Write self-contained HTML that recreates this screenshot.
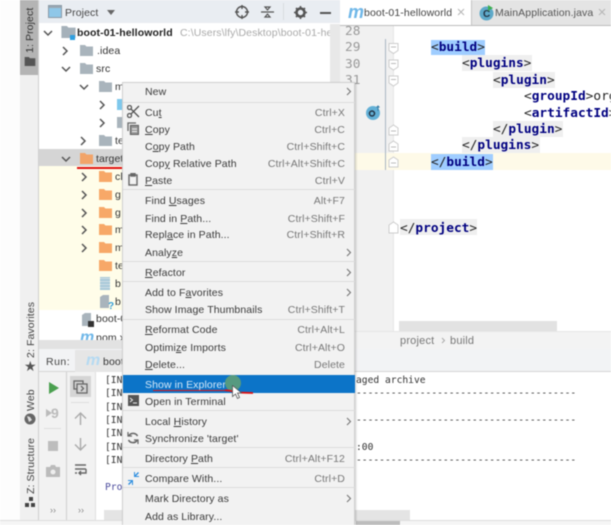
<!DOCTYPE html>
<html><head><meta charset="utf-8"><style>
html,body{margin:0;padding:0;background:#fff}
#r{position:relative;width:611px;height:525px;overflow:hidden;background:#fff;font:10.5px "Liberation Sans",sans-serif;color:#333;filter:blur(.45px)}
#r div,#r svg,#r span.a{position:absolute}
.t{white-space:pre;line-height:14px;height:14px;letter-spacing:.1px;margin-top:1px}
.m{color:#3a3a3a}
.k{color:#777;text-align:right;right:266px;width:150px;letter-spacing:.1px}
.s{left:123px;width:232px;height:1px;background:#dcdcdc}
.c{font:12.8px/16px "DejaVu Sans Mono",monospace;white-space:pre;color:#222;height:16px;margin-top:1px}
.c b{color:#000080}
.bg{background:#efefef}
.sel{background:#9fcdff}
.n{font:12.8px/16px "DejaVu Sans Mono",monospace;color:#999;left:345px;margin-top:1px}
.o{font:9.65px/13px "DejaVu Sans Mono",monospace;white-space:pre;color:#333;height:13px}
.v{transform-origin:0 0;transform:rotate(-90deg);white-space:pre;color:#444;line-height:14px;letter-spacing:.1px}
</style></head><body><div id="r">
<svg width="0" height="0" style="left:0;top:0"><defs>
<symbol id="f" viewBox="0 0 13 11"><path d="M0 0h5l1.5 1.5H13V11H0z"/></symbol>
<symbol id="ar" viewBox="0 0 8 10"><path d="M2 1l4 4-4 4" fill="none" stroke="#555" stroke-width="1.5"/></symbol>
<symbol id="ad" viewBox="0 0 10 8"><path d="M1 2l4 4 4-4" fill="none" stroke="#555" stroke-width="1.5"/></symbol>
</defs></svg>

<!-- left strips -->
<div style="left:0;top:0;width:20px;height:525px;background:#fdfdfd"></div>
<div style="left:20px;top:0;width:19px;height:525px;background:#f0f0f0"></div>
<div style="left:20px;top:0;width:18px;height:75px;background:#b4b4b4"></div>
<div style="left:38px;top:0;width:1px;height:525px;background:#cfcfcf"></div>
<div class="v" style="left:23px;top:53px;color:#333">1: Project</div>
<svg style="left:24px;top:57px" width="12" height="9" fill="#555"><use href="#f"/></svg>
<div class="v" style="left:24px;top:358px">2: Favorites</div>
<div style="left:24px;top:359px;font-size:14px;line-height:14px;color:#555">★</div>
<div class="v" style="left:24px;top:411px">Web</div>
<svg style="left:24px;top:413px" width="12" height="12"><circle cx="6" cy="6" r="5.5" fill="#666"/><path d="M3 3l3 1 2 3-3 2z" fill="#ddd"/></svg>
<div class="v" style="left:24px;top:494px">Z: Structure</div>
<svg style="left:25px;top:497px" width="11" height="11" fill="#444"><rect x="4" y="0" width="4" height="4"/><rect x="0" y="6" width="4" height="4"/><rect x="6" y="6" width="4" height="4"/></svg>

<!-- project toolbar -->
<div style="left:39px;top:0;width:301px;height:23px;background:#e9edf2"></div>
<svg style="left:48px;top:5px" width="14" height="13"><rect x=".5" y=".5" width="13" height="12" fill="#8fc7e8" stroke="#8a9aa8"/><rect x="1" y="1" width="12" height="2" fill="#9aa7b2"/></svg>
<div class="t" style="left:65px;top:5px;color:#444">Project</div>
<svg style="left:107px;top:10px" width="9" height="5"><path d="M0 0h8L4 5z" fill="#666"/></svg>
<svg style="left:235px;top:5px" width="14" height="14" fill="none" stroke="#555" stroke-width="1.4"><circle cx="7" cy="7" r="5.5"/><path d="M7 0v4M7 10v4M0 7h4M10 7h4"/></svg>
<svg style="left:261px;top:5px" width="13" height="14" fill="none" stroke="#555" stroke-width="1.2"><path d="M0 7h13M4 2h5L6.500 5zM4 12h5L6.500 9z"/></svg>
<div style="left:283px;top:3px;width:1px;height:17px;background:#d8dce0"></div>
<svg style="left:294px;top:6px" width="13" height="13"><circle cx="6.500" cy="6.500" r="4" fill="none" stroke="#555" stroke-width="2.600"/><path d="M6.500 0v13M0 6.500h13M2 2l9 9M11 2l-9 9" stroke="#555" stroke-width="1.600" stroke-dasharray="2 9 2 0"/></svg>
<div style="left:320px;top:12px;width:11px;height:1.500px;background:#555"></div>

<!-- tree -->
<div style="left:39px;top:23px;width:291px;height:317px;background:#fff"></div>
<div style="left:330px;top:24px;width:10px;height:60px;background:#e8e8e8"></div>
<div style="left:39px;top:149px;width:83px;height:17px;background:#d5d5d5"></div>
<div style="left:39px;top:166px;width:83px;height:144px;background:#fffde9"></div>
<svg style="left:43px;top:29px" width="10" height="8"><use href="#ad"/></svg>
<svg style="left:61px;top:26px" width="15" height="12"><use href="#f" fill="#a5b1ba"/></svg>
<div style="left:70px;top:35px;width:5px;height:5px;background:#2f9fe0"></div>
<div class="t" style="left:77px;top:25px;font-weight:bold;color:#222">boot-01-helloworld</div>
<div class="t" style="left:180px;top:25px;color:#aaa;width:150px;overflow:hidden">C:\Users\lfy\Desktop\boot-01-hello</div>
<svg style="left:61px;top:46px" width="8" height="10"><use href="#ar"/></svg>
<svg style="left:80px;top:45px" width="13" height="11"><use href="#f" fill="#a9b4bc"/></svg>
<div class="t" style="left:97px;top:43px">.idea</div>
<svg style="left:61px;top:65px" width="10" height="8"><use href="#ad"/></svg>
<svg style="left:80px;top:63px" width="13" height="11"><use href="#f" fill="#a9b4bc"/></svg>
<div class="t" style="left:96px;top:61px">src</div>
<svg style="left:79px;top:83px" width="10" height="8"><use href="#ad"/></svg>
<svg style="left:99px;top:81px" width="13" height="11"><use href="#f" fill="#a9b4bc"/></svg>
<div class="t" style="left:115px;top:79px">m</div>
<svg style="left:98px;top:100px" width="8" height="10"><use href="#ar"/></svg>
<svg style="left:117px;top:99px" width="13" height="11"><use href="#f" fill="#7fc8ec"/></svg>
<svg style="left:98px;top:118px" width="8" height="10"><use href="#ar"/></svg>
<svg style="left:117px;top:117px" width="13" height="11"><use href="#f" fill="#a9b4bc"/></svg>
<svg style="left:79px;top:136px" width="8" height="10"><use href="#ar"/></svg>
<svg style="left:99px;top:135px" width="13" height="11"><use href="#f" fill="#a9b4bc"/></svg>
<div class="t" style="left:115px;top:133px">te</div>
<svg style="left:61px;top:155px" width="10" height="8"><use href="#ad"/></svg>
<svg style="left:80px;top:153px" width="13" height="11"><use href="#f" fill="#f2a469"/></svg>
<div class="t" style="left:96px;top:151px">target</div>
<div style="left:77px;top:167px;width:62px;height:2px;background:#e01010"></div>
<svg style="left:80px;top:172px" width="8" height="10"><use href="#ar"/></svg>
<svg style="left:99px;top:171px" width="13" height="11"><use href="#f" fill="#f7a868"/></svg>
<div class="t" style="left:115px;top:169px">cl</div>
<svg style="left:80px;top:190px" width="8" height="10"><use href="#ar"/></svg>
<svg style="left:99px;top:189px" width="13" height="11"><use href="#f" fill="#f7a868"/></svg>
<div class="t" style="left:115px;top:187px">g</div>
<svg style="left:80px;top:208px" width="8" height="10"><use href="#ar"/></svg>
<svg style="left:99px;top:207px" width="13" height="11"><use href="#f" fill="#f7a868"/></svg>
<div class="t" style="left:115px;top:205px">g</div>
<svg style="left:80px;top:225px" width="8" height="10"><use href="#ar"/></svg>
<svg style="left:99px;top:224px" width="13" height="11"><use href="#f" fill="#f7a868"/></svg>
<div class="t" style="left:115px;top:222px">m</div>
<svg style="left:80px;top:243px" width="8" height="10"><use href="#ar"/></svg>
<svg style="left:99px;top:242px" width="13" height="11"><use href="#f" fill="#f7a868"/></svg>
<div class="t" style="left:115px;top:240px">m</div>
<svg style="left:99px;top:260px" width="13" height="11"><use href="#f" fill="#f7a868"/></svg>
<div class="t" style="left:115px;top:258px">te</div>
<div style="left:100px;top:277px;width:10px;height:13px;background:repeating-linear-gradient(0deg,#a8c8d8 0 2px,#d0dfe6 2px 3px)"></div>
<div class="t" style="left:115px;top:276px">b</div>
<svg style="left:100px;top:295px" width="14" height="14"><path d="M0 2l3-2h6v13H0z" fill="#a9b4bc"/><text x="8" y="14" font-size="10" font-weight="bold" fill="#38a0d8" font-family="Liberation Sans">?</text></svg>
<div class="t" style="left:115px;top:294px">b</div>
<svg style="left:82px;top:313px" width="12" height="14"><path d="M0 2l3-2h6v13H0z" fill="#a9b4bc"/><rect x="6" y="8" width="6" height="6" fill="#333"/></svg>
<div class="t" style="left:96px;top:311px">boot-0</div>
<div style="left:80px;top:331px;font:italic bold 16px/14px 'Liberation Sans',sans-serif;color:#6fb7e8">m</div>
<div class="t" style="left:96px;top:330px">pom.x</div>
<div style="left:39px;top:340px;width:301px;height:9px;background:#e2e2e2"></div>

<!-- tabs -->
<div style="left:340px;top:0;width:271px;height:26px;background:#e4e4e4;border-bottom:1px solid #bdbdbd;box-sizing:border-box"></div>
<div style="left:340px;top:0;width:131px;height:26px;background:#fff;border-bottom:1px solid #bdbdbd;box-sizing:border-box"></div>
<div style="left:471px;top:0;width:1px;height:25px;background:#c4c4c4"></div>
<div style="left:348px;top:3px;font:italic bold 18px/18px 'Liberation Sans',sans-serif;color:#6fb7e8">m</div>
<div class="t" style="left:364px;top:5px;color:#444;letter-spacing:.1px">boot-01-helloworld</div>
<svg style="left:457px;top:8px" width="8" height="8"><path d="M1 1l6 6M7 1L1 7" stroke="#b5b5b5" stroke-width="1"/></svg>
<svg style="left:479px;top:5px" width="16" height="16"><circle cx="7.500" cy="8.500" r="7" fill="#5ea9c9"/><text x="4" y="12" font-size="10" font-weight="bold" fill="#234" font-family="Liberation Sans">C</text><path d="M9 0l5 3-5 3z" fill="#3cae50"/></svg>
<div class="t" style="left:495px;top:5px;color:#555;letter-spacing:.1px">MainApplication.java</div>
<svg style="left:598px;top:8px" width="8" height="8"><path d="M1 1l6 6M7 1L1 7" stroke="#b5b5b5" stroke-width="1"/></svg>

<!-- gutter/editor -->
<div style="left:340px;top:26px;width:53px;height:305px;background:#f1f1f1"></div>
<div style="left:393px;top:26px;width:1px;height:305px;background:#e6e6e6"></div>
<div style="left:340px;top:153px;width:271px;height:17px;background:#fefae8"></div>
<div style="left:384.500px;top:39px;width:1.500px;height:131px;background:#a9b6c2"></div>
<div class="n" style="top:23px">28</div><div class="n" style="top:39px">29</div><div class="n" style="top:56px">30</div><div class="n" style="top:72px">31</div>
<svg style="left:365px;top:105px" width="16" height="16"><circle cx="8" cy="8" r="7" fill="#63b0d6"/><circle cx="7" cy="8.500" r="2.500" fill="none" stroke="#234" stroke-width="1.500"/><path d="M13 1v5M11.500 2.500L13 1l1.500 1.500" stroke="#3a7fa8" fill="none"/></svg>
<svg style="left:388px;top:43px" width="11" height="130" fill="#fff" stroke="#ccc"><path d="M1 .5h9v7l-4.500 3-4.500-3zM1 17h9v7l-4.500 3-4.500-3zM1 33h9v7l-4.500 3-4.500-3zM1 85l4.500-3 4.500 3v7H1zM1 101l4.500-3 4.500 3v7H1zM1 117l4.500-3 4.500 3v7H1z"/><path d="M3 4h5M3 20.500h5M3 36.500h5M3 88h5M3 104h5M3 120h5" stroke="#bbb"/></svg>
<svg style="left:388px;top:221px" width="11" height="14" fill="#fff" stroke="#ccc"><path d="M1 4l4.500-3 4.500 3v8H1z"/></svg>
<div class="sel" style="left:431px;top:40px;width:54px;height:15px"></div>
<div class="sel" style="left:431px;top:154px;width:62px;height:16px"></div>
<div class="bg" style="left:462px;top:55px;width:70px;height:16px"></div>
<div class="bg" style="left:493px;top:72px;width:62px;height:16px"></div>
<div class="bg" style="left:493px;top:121px;width:70px;height:16px"></div>
<div class="bg" style="left:462px;top:137px;width:78px;height:16px"></div>
<div class="bg" style="left:400px;top:219px;width:77px;height:16px"></div>
<div class="c" style="left:431px;top:39px">&lt;<b>build</b>&gt;</div>
<div class="c" style="left:462px;top:55px">&lt;<b>plugins</b>&gt;</div>
<div class="c" style="left:493px;top:72px">&lt;<b>plugin</b>&gt;</div>
<div class="c" style="left:524px;top:88px">&lt;<b>groupId</b>&gt;org</div>
<div class="c" style="left:524px;top:105px">&lt;<b>artifactId</b>&gt;</div>
<div class="c" style="left:493px;top:121px">&lt;/<b>plugin</b>&gt;</div>
<div class="c" style="left:462px;top:137px">&lt;/<b>plugins</b>&gt;</div>
<div class="c" style="left:431px;top:154px">&lt;/<b>build</b>&gt;</div>
<div class="c" style="left:400px;top:220px">&lt;/<b>project</b>&gt;</div>
<div style="left:399px;top:321px;width:158px;height:10px;background:#e2e2e2"></div>
<div style="left:340px;top:331px;width:271px;height:18px;background:#f3f3f3;border-top:1px solid #e6e6e6;box-sizing:border-box"></div>
<div class="t" style="left:400px;top:333px;color:#777;font-size:11px;letter-spacing:.2px">project</div>
<svg style="left:441px;top:337px" width="5" height="7"><path d="M1 1l2.500 2.500L1 6" fill="none" stroke="#aaa"/></svg>
<div class="t" style="left:450px;top:333px;color:#777;font-size:11px;letter-spacing:.2px">build</div>

<!-- run -->
<div style="left:39px;top:349px;width:572px;height:23px;background:#f2f3f5;border-bottom:1px solid #d6d6d6;box-sizing:border-box"></div>
<div style="left:75px;top:350px;width:60px;height:22px;background:#e6e6e6"></div>
<div class="t" style="left:46px;top:354px;color:#444;letter-spacing:.5px">Run:</div>
<div style="left:86px;top:353px;font:italic bold 16px/16px 'Liberation Sans',sans-serif;color:#b5daf2">m</div>
<div class="t" style="left:103px;top:354px">boot</div>
<div style="left:39px;top:372px;width:56px;height:148px;background:#f2f2f2"></div>
<div style="left:66px;top:372px;width:1px;height:148px;background:#cfcfcf"></div>
<div style="left:95px;top:372px;width:1px;height:148px;background:#e0e0e0"></div>
<svg style="left:49px;top:382px" width="10" height="12"><path d="M0 0l10 6-10 6z" fill="#4ba050"/></svg>
<svg style="left:46px;top:405px" width="15" height="15"><path d="M0 4l6 4-6 4z" fill="#bbb"/><text x="5" y="13" font-size="14" font-weight="bold" fill="#bbb" font-family="Liberation Sans">9</text></svg>
<div style="left:44px;top:428px;width:17px;height:1px;background:#ddd"></div>
<div style="left:48px;top:441px;width:10px;height:10px;background:#bdbdbd"></div>
<svg style="left:46px;top:465px" width="14" height="12"><path d="M0 2h4l1-2h4l1 2h4v10H0z" fill="#bbb"/><circle cx="7" cy="7" r="2.500" fill="#eee"/></svg>
<div style="left:70px;top:376px;width:21px;height:21px;background:#d5d5d5"></div>
<svg style="left:73px;top:380px" width="15" height="14" fill="none" stroke="#666" stroke-width="1.300"><rect x="1" y="1" width="9" height="8"/><rect x="4" y="4" width="10" height="9" fill="#d5d5d5"/><path d="M8 6l2.500 2.500L8 11"/></svg>
<div style="left:71px;top:402px;width:18px;height:1px;background:#ddd"></div>
<svg style="left:74px;top:412px" width="13" height="13" fill="none" stroke="#aaa" stroke-width="1.400"><path d="M6.500 13V1M1 6.500L6.500 1 12 6.500"/></svg>
<svg style="left:74px;top:438px" width="13" height="13" fill="none" stroke="#aaa" stroke-width="1.400"><path d="M6.500 0v12M1 6.500L6.500 12 12 6.500"/></svg>
<svg style="left:74px;top:464px" width="13" height="13" fill="none" stroke="#666" stroke-width="1.400"><path d="M1 1h11M1 5h11M12 5v4H5M7 7L5 9l2 2M1 9h2"/></svg>
<div style="left:50px;top:505px;font-size:9px;line-height:10px;color:#888">››</div>
<div style="left:78px;top:505px;font-size:9px;line-height:10px;color:#888">››</div>
<div class="o" style="left:105px;top:374px">[IN</div>
<div class="o" style="left:105px;top:387px">[IN</div>
<div class="o" style="left:105px;top:401px">[IN</div>
<div class="o" style="left:105px;top:414px">[IN</div>
<div class="o" style="left:105px;top:427px">[IN</div>
<div class="o" style="left:105px;top:441px">[IN</div>
<div class="o" style="left:105px;top:454px">[IN</div>
<div class="o" style="left:105px;top:481px;color:#4a4a9c">Pro</div>
<div class="o" style="left:356px;top:374px">aged archive</div>
<div class="o" style="left:356px;top:387px">--------------------------------------</div>
<div class="o" style="left:356px;top:414px">--------------------------------------</div>
<div class="o" style="left:356px;top:441px">:00</div>
<div class="o" style="left:356px;top:454px">--------------------------------------</div>
<div style="left:104px;top:510px;width:306px;height:10px;background:#e4e4e4"></div>
<div style="left:0;top:520px;width:611px;height:5px;background:#f5f5f5;border-top:1px solid #ddd;box-sizing:border-box"></div>
<div style="left:356px;top:521px;width:44px;height:4px;background:#bdbdbd"></div>

<!-- context menu -->
<div style="left:122px;top:82px;width:233px;height:443px;background:#f2f2f2;border:1px solid #d0d0d0;border-bottom:0;box-sizing:border-box;box-shadow:1px 1px 2px rgba(0,0,0,.2)"></div>
<div class="s" style="top:102px"></div><div class="s" style="top:189px"></div><div class="s" style="top:261px"></div><div class="s" style="top:281px"></div><div class="s" style="top:319px"></div><div class="s" style="top:410px"></div><div class="s" style="top:447px"></div><div class="s" style="top:467px"></div><div class="s" style="top:487px"></div>
<div style="left:123px;top:375px;width:232px;height:18px;background:#0c74c8"></div>
<div class="t m" style="left:145px;top:84px">New</div>
<div class="t m" style="left:145px;top:105px">Cu<u>t</u></div><div class="t k" style="top:105px">Ctrl+X</div>
<div class="t m" style="left:145px;top:122px"><u>C</u>opy</div><div class="t k" style="top:122px">Ctrl+C</div>
<div class="t m" style="left:145px;top:139px">C<u>o</u>py Path</div><div class="t k" style="top:139px">Ctrl+Shift+C</div>
<div class="t m" style="left:145px;top:156px">Cop<u>y</u> Relative Path</div><div class="t k" style="top:156px">Ctrl+Alt+Shift+C</div>
<div class="t m" style="left:145px;top:173px"><u>P</u>aste</div><div class="t k" style="top:173px">Ctrl+V</div>
<div class="t m" style="left:145px;top:193px">Find <u>U</u>sages</div><div class="t k" style="top:193px">Alt+F7</div>
<div class="t m" style="left:145px;top:211px">Find in <u>P</u>ath...</div><div class="t k" style="top:211px">Ctrl+Shift+F</div>
<div class="t m" style="left:145px;top:227px">Repl<u>a</u>ce in Path...</div><div class="t k" style="top:227px">Ctrl+Shift+R</div>
<div class="t m" style="left:145px;top:245px">Analy<u>z</u>e</div>
<div class="t m" style="left:145px;top:265px"><u>R</u>efactor</div>
<div class="t m" style="left:145px;top:285px">Add to F<u>a</u>vorites</div>
<div class="t m" style="left:145px;top:302px">Show Image Thumbnails</div><div class="t k" style="top:302px">Ctrl+Shift+T</div>
<div class="t m" style="left:145px;top:322px"><u>R</u>eformat Code</div><div class="t k" style="top:322px">Ctrl+Alt+L</div>
<div class="t m" style="left:145px;top:340px">Optimi<u>z</u>e Imports</div><div class="t k" style="top:340px">Ctrl+Alt+O</div>
<div class="t m" style="left:145px;top:357px"><u>D</u>elete...</div><div class="t k" style="top:357px">Delete</div>
<div class="t" style="left:145px;top:377px;color:#d5e8f8">Show in Explorer</div>
<div class="t m" style="left:145px;top:394px">Open in Terminal</div>
<div class="t m" style="left:145px;top:414px">Local <u>H</u>istory</div>
<div class="t m" style="left:145px;top:431px">Synchronize 'target'</div>
<div class="t m" style="left:145px;top:451px">Directory <u>P</u>ath</div><div class="t k" style="top:451px">Ctrl+Alt+F12</div>
<div class="t m" style="left:145px;top:471px">Compare With...</div><div class="t k" style="top:471px">Ctrl+D</div>
<div class="t m" style="left:145px;top:491px">Mark Directory as</div>
<div class="t m" style="left:145px;top:509px">Add as Library...</div>
<svg style="left:346px;top:87px" width="6" height="9"><path d="M1 1l3.500 3.500L1 8" fill="none" stroke="#777" stroke-width="1.100"/></svg>
<svg style="left:346px;top:248px" width="6" height="9"><path d="M1 1l3.500 3.500L1 8" fill="none" stroke="#777" stroke-width="1.100"/></svg>
<svg style="left:346px;top:268px" width="6" height="9"><path d="M1 1l3.500 3.500L1 8" fill="none" stroke="#777" stroke-width="1.100"/></svg>
<svg style="left:346px;top:288px" width="6" height="9"><path d="M1 1l3.500 3.500L1 8" fill="none" stroke="#777" stroke-width="1.100"/></svg>
<svg style="left:346px;top:417px" width="6" height="9"><path d="M1 1l3.500 3.500L1 8" fill="none" stroke="#777" stroke-width="1.100"/></svg>
<svg style="left:346px;top:494px" width="6" height="9"><path d="M1 1l3.500 3.500L1 8" fill="none" stroke="#777" stroke-width="1.100"/></svg>
<svg style="left:127px;top:105px" width="13" height="13" fill="none" stroke="#555" stroke-width="1.300"><circle cx="2.500" cy="2.500" r="2"/><circle cx="2.500" cy="10.500" r="2"/><path d="M4 4l8 8M4 9l8-8"/></svg>
<svg style="left:127px;top:122px" width="12" height="13" fill="none" stroke="#666" stroke-width="1.300"><path d="M1 9V1h8"/><rect x="3.500" y="3.500" width="8" height="9" fill="#999"/><path d="M5 7h5M5 9.500h5" stroke="#eee" stroke-width="1"/></svg>
<svg style="left:128px;top:173px" width="10" height="13" fill="none" stroke="#666" stroke-width="1.400"><rect x="1" y="2" width="8" height="10"/><rect x="3" y="0" width="4" height="3" fill="#666"/></svg>
<svg style="left:128px;top:395px" width="11" height="11"><rect width="11" height="11" fill="#555"/><path d="M2 3l2.500 2L2 7M5 8h4" stroke="#eee" fill="none"/></svg>
<svg style="left:127px;top:432px" width="12" height="12" fill="none" stroke="#666" stroke-width="1.600"><path d="M10.500 4A5 5 0 002 3.500M1.500 8A5 5 0 0010 8.500"/><path d="M1 0v4h4M11 12V8H7" stroke-width="1.200"/></svg>
<svg style="left:127px;top:472px" width="13" height="13" fill="#2f8fe0"><path d="M7 0h1v3l3-3 1 1-3 3h3v1H7zM6 13H5v-3l-3 3-1-1 3-3H1V8h5z"/></svg>

<!-- annotations -->
<div style="left:225px;top:375px;width:16px;height:16px;border-radius:50%;background:#5e9e78;opacity:.9"></div>
<div style="left:153px;top:389.500px;width:74px;height:1.500px;background:#e01010"></div>
<svg style="left:225px;top:388px" width="28" height="8"><path d="M0 2.200l5 .5 6 1.800 17 .5" fill="none" stroke="#e01010" stroke-width="1.800"/></svg>
<svg style="left:232px;top:385px" width="10" height="15"><path d="M.5.5v11l3-2.500 2 4.500 2-1-2-4.500h4z" fill="#fff" stroke="#555" stroke-width=".8"/></svg>
</div></body></html>
